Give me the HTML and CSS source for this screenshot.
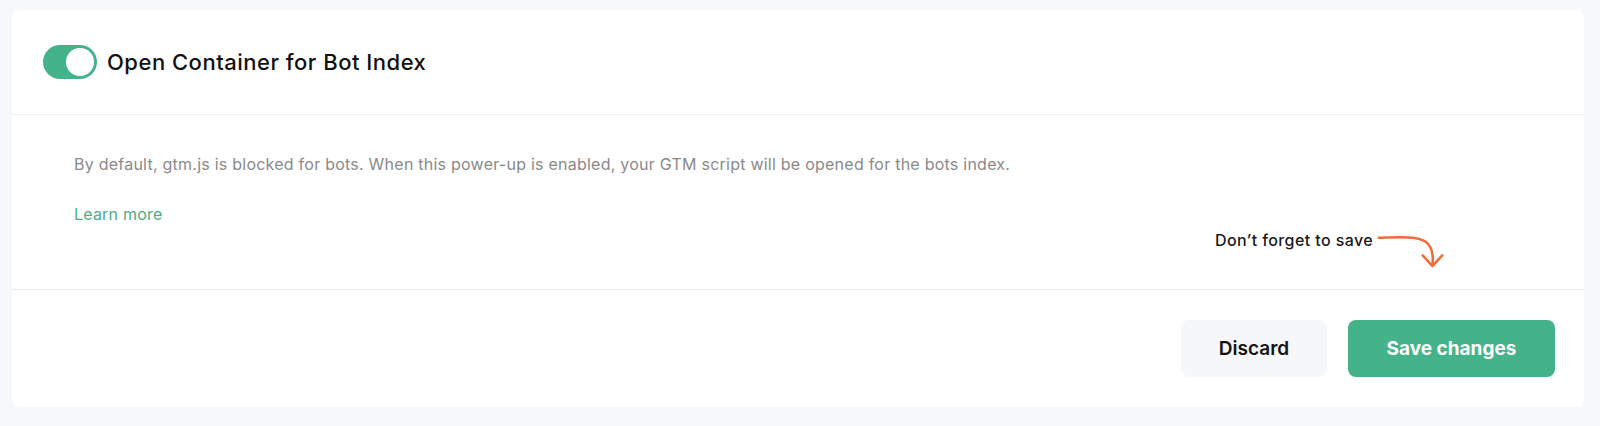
FILE: index.html
```html
<!DOCTYPE html>
<html lang="en">
<head>
<meta charset="utf-8">
<title>Open Container for Bot Index</title>
<link rel="stylesheet" href="styles.css">
</head>
<body>
<div class="page">
  <section class="card">
    <header class="card-header">
      <span class="toggle" role="switch" aria-checked="true"><span class="knob"></span></span>
      <h2 class="title">Open Container for Bot Index</h2>
    </header>
    <div class="card-body">
      <p class="desc">By default, gtm.js is blocked for bots. When this power-up is enabled, your GTM script will be opened for the bots index.</p>
      <a class="learn" href="#">Learn more</a>
      <div class="note-row">
        <span class="note">Don’t forget to save</span>
        <svg class="arrow" width="70" height="40" viewBox="0 0 70 40" fill="none" stroke="#f26b3a" stroke-width="2.6" stroke-linecap="round" stroke-linejoin="round">
          <path d="M2 8 C 22 7.5, 40 6, 50 12 C 57 17, 58 27, 57 36"/>
          <path d="M47 26 L57 37 L67 26"/>
        </svg>
      </div>
    </div>
    <footer class="card-footer">
      <button class="btn btn-secondary" type="button">Discard</button>
      <button class="btn btn-primary" type="button">Save changes</button>
    </footer>
  </section>
</div>
</body>
</html>
```
FILE: styles.css
```css
* { box-sizing: border-box; }
html, body { margin: 0; padding: 0; }
body {
  background: #f7f8fa;
  font-family: Inter, "Noto Sans", "Liberation Sans", sans-serif;
  color: #161616;
}
.page {
  padding: 10px 16px 19px 12px;
}
.card {
  background: #ffffff;
  border-radius: 8px;
  overflow: hidden;
}
.card-header {
  height: 105px;
  display: flex;
  align-items: center;
  gap: 10px;
  padding-left: 31px;
  border-bottom: 1px solid #efefef;
}
.toggle {
  width: 54px;
  height: 34px;
  border-radius: 17px;
  background: #45b38a;
  display: flex;
  align-items: center;
  justify-content: flex-end;
  padding: 3px;
  flex: none;
}
.knob {
  width: 28px;
  height: 28px;
  border-radius: 50%;
  background: #ffffff;
}
.title {
  margin: 0;
  font-size: 22px;
  font-weight: 500;
  color: #111111;
  letter-spacing: 0.5px;
}
.card-body {
  padding: 37px 138px 20px 62px;
  display: flex;
  flex-direction: column;
  align-items: flex-start;
}
.desc {
  margin: 0;
  font-size: 16px;
  line-height: 24px;
  color: #8a8a8a;
  letter-spacing: 0.24px;
}
.learn {
  margin-top: 26px;
  font-size: 16px;
  line-height: 24px;
  color: #4aae88;
  text-decoration: none;
  letter-spacing: 0.2px;
}
.note-row {
  margin-top: 4px;
  align-self: flex-end;
  display: flex;
  align-items: flex-start;
  gap: 3px;
}
.note {
  font-size: 16px;
  line-height: 20px;
  font-weight: 500;
  color: #1a1a1a;
  letter-spacing: 0.4px;
}
.arrow {
  display: block;
  height: 39px;
}
.card-footer {
  height: 118px;
  border-top: 1px solid #ececec;
  display: flex;
  align-items: center;
  justify-content: flex-end;
  gap: 21px;
  padding-right: 29px;
}
.btn {
  height: 57px;
  border: none;
  border-radius: 8px;
  font-family: inherit;
  font-size: 19px;
  cursor: pointer;
}
.btn-secondary {
  width: 146px;
  background: #f6f7f9;
  color: #141414;
  font-weight: 600;
}
.btn-primary {
  width: 207px;
  background: #45b38a;
  color: #ffffff;
  font-weight: 700;
}
```
